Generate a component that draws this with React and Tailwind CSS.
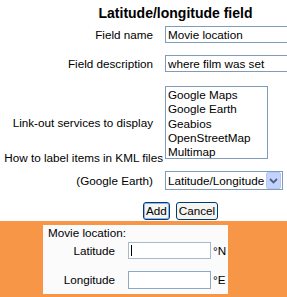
import { useState } from "react";

const services = ["Google Maps", "Google Earth", "Geabios", "OpenStreetMap", "Multimap"];

function Row({ label, children, className = "" }) {
  return (
    <div className={"flex items-center " + className}>
      <div className="w-[153px] shrink-0 text-right whitespace-nowrap">{label}</div>
      <div className="ml-[12px] shrink-0">{children}</div>
    </div>
  );
}

export default function App() {
  const [name, setName] = useState("Movie location");
  const [desc, setDesc] = useState("where film was set");

  return (
    <div className="w-[287px] h-[297px] overflow-hidden bg-white text-[11.7px] leading-[14px] text-black font-['Liberation_Sans',Arial,sans-serif]">
      {/* Formular oben */}
      <div className="pt-[5px]">
        <h1 className="w-[351px] text-center text-[14px] leading-[17px] font-bold">
          Latitude/longitude field
        </h1>

        <Row label="Field name" className="mt-[4px]">
          <input
            value={name}
            onChange={(e) => setName(e.target.value)}
            className="w-[150px] h-[17px] px-[2px] border border-[#7f9db9] bg-white outline-none text-[11.7px]"
          />
        </Row>

        <Row label="Field description" className="mt-[12px]">
          <input
            value={desc}
            onChange={(e) => setDesc(e.target.value)}
            className="w-[150px] h-[17px] px-[2px] border border-[#7f9db9] bg-white outline-none text-[11.7px]"
          />
        </Row>

        <Row label="Link-out services to display" className="mt-[14px]">
          <div className="w-[103px] h-[73px] border border-[#7f9db9] bg-white pl-[2px] pt-[1px] overflow-hidden">
            {services.map((s) => (
              <div key={s} className="leading-[14.3px] whitespace-nowrap">{s}</div>
            ))}
          </div>
        </Row>

        <div className="mt-[-8px] w-[163px] text-right whitespace-nowrap">How to label items in KML files</div>

        <Row label="(Google Earth)" className="mt-[6px]">
          <div className="w-[118px] h-[19px] border border-[#7f9db9] bg-white flex items-center">
            <span className="flex-1 pl-[2px] whitespace-nowrap overflow-hidden">Latitude/Longitude</span>
            <span className="w-[15px] h-[17px] mr-[1px] shrink-0 rounded-[2px] bg-[#c3d3fd] border border-[#b4c8f6] flex items-center justify-center">
              <svg width="9" height="6" viewBox="0 0 9 6">
                <path d="M1 1 L4.5 4.5 L8 1" fill="none" stroke="#4d6185" strokeWidth="1.8" />
              </svg>
            </span>
          </div>
        </Row>

        <div className="mt-[12px] ml-[143px] flex gap-[6px]">
          <button className="h-[18px] px-[2px] rounded-[3px] border border-[#003c74] bg-[#f4f4f0] shadow-[inset_0_0_0_1px_#8cb4f2] leading-[14px]">
            Add
          </button>
          <button className="h-[18px] px-[2px] rounded-[3px] border border-[#003c74] bg-[#f4f4f0] leading-[14px]">
            Cancel
          </button>
        </div>
      </div>

      {/* Vorschau unten */}
      <div className="mt-[1px] h-[77px] bg-[#f79646] pt-[4px] pl-[43px]">
        <div className="w-[185px] h-[69px] bg-[#fbfbfb] pt-[1px]">
          <div className="pl-[5px]">Movie location:</div>
          <div className="mt-[2px] flex items-center">
            <div className="w-[72px] text-right">Latitude</div>
            <div className="ml-[13px] relative w-[83px] h-[17px] border border-[#a5b9cf] bg-white">
              <span className="absolute left-[2px] top-[2px] w-px h-[11px] bg-black" />
            </div>
            <span className="ml-[2px]">°N</span>
          </div>
          <div className="mt-[12px] flex items-center">
            <div className="w-[72px] text-right">Longitude</div>
            <div className="ml-[13px] w-[83px] h-[18px] border border-[#8ea9c4] bg-white" />
            <span className="ml-[2px]">°E</span>
          </div>
        </div>
      </div>
    </div>
  );
}
